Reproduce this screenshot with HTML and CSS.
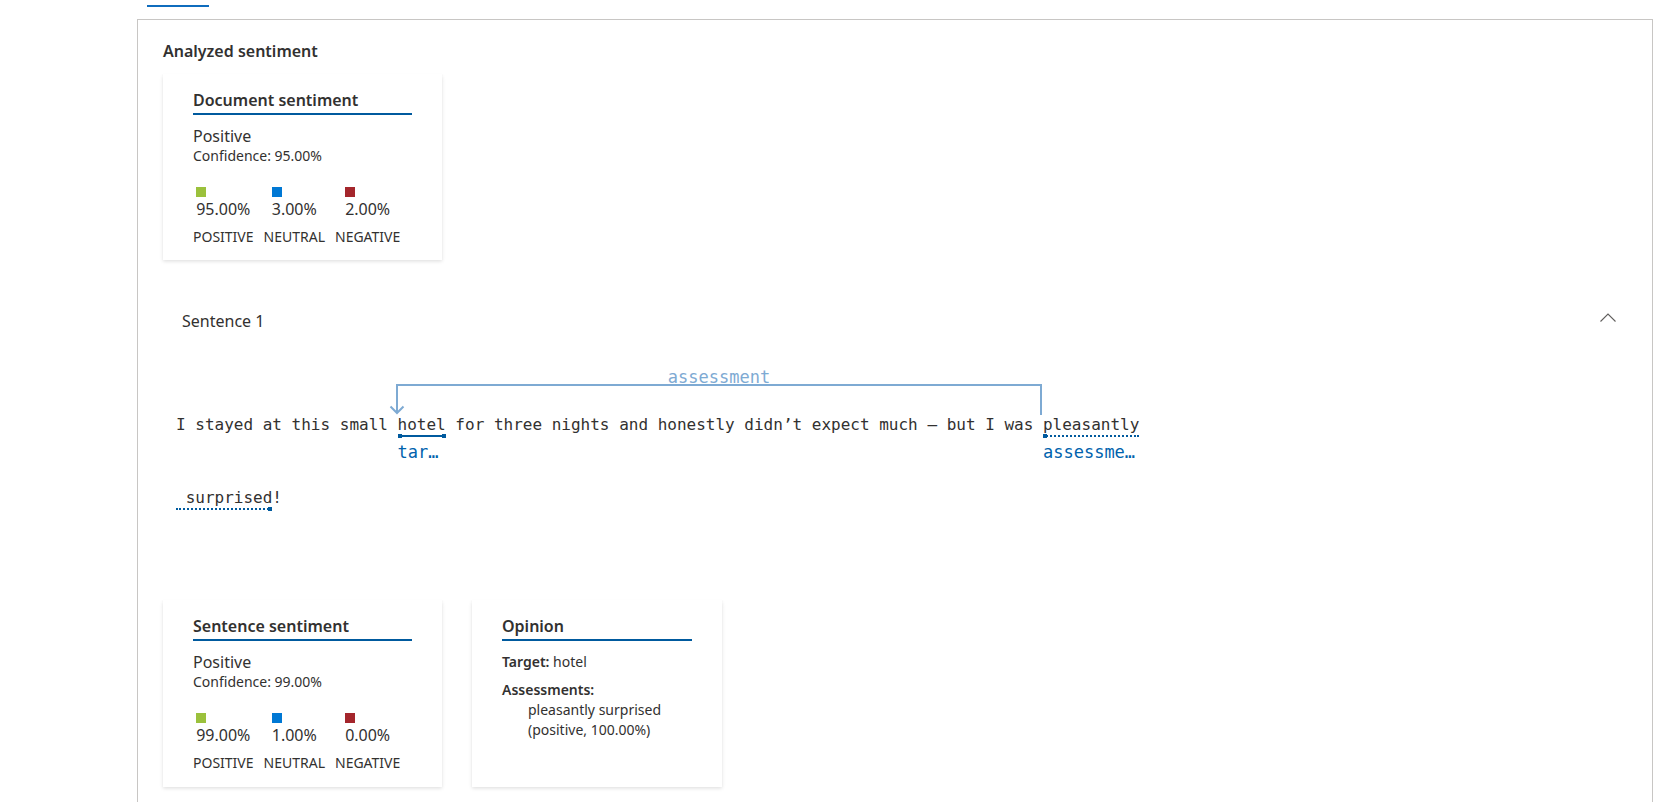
FILE: index.html
```html
<!DOCTYPE html>
<html lang="en">
<head>
<meta charset="utf-8">
<title>Analyzed sentiment</title>
<link rel="stylesheet" href="styles.css">
</head>
<body>
<div class="tabs"><div class="tab-indicator"></div></div>
<section class="panel">
  <h2 class="panel-title">Analyzed sentiment</h2>
  <div class="card doc-card">
    <h3 class="card-title">Document sentiment</h3>
    <div class="sent-label">Positive</div>
    <div class="confidence">Confidence: 95.00%</div>
    <div class="scores">
      <div class="score"><div class="score-val"><span class="swatch pos"></span><span class="pct">95.00%</span></div><div class="score-name">POSITIVE</div></div>
      <div class="score"><div class="score-val"><span class="swatch neu"></span><span class="pct">3.00%</span></div><div class="score-name">NEUTRAL</div></div>
      <div class="score"><div class="score-val"><span class="swatch neg"></span><span class="pct">2.00%</span></div><div class="score-name">NEGATIVE</div></div>
    </div>
  </div>

  <div class="sentence">
    <div class="sentence-header">
      <span class="sentence-name">Sentence 1</span>
      <button class="chevron" aria-label="Collapse">
        <svg width="16" height="9" viewBox="0 0 16 9"><polyline points="0.5,8.5 8,1 15.5,8.5" fill="none" stroke="#605e5c" stroke-width="1.1"/></svg>
      </button>
    </div>
    <div class="sentence-text">
      <svg class="arcs" width="900" height="80" viewBox="0 0 900 80">
        <path d="M865 75 V45 H221 V73" fill="none" stroke="#7eaad3" stroke-width="2"/>
        <path d="M214.5 66.5 L221 73 L227.5 66.5" fill="none" stroke="#7eaad3" stroke-width="2"/>
        <text x="543" y="43" text-anchor="middle" class="arc-label">assessment</text>
      </svg>
      <div class="line">
        <span class="tok">I stayed at this small </span>
        <span class="ann"><span class="ann-word solid start end">hotel</span><span class="ann-label">tar…</span></span>
        <span class="tok"> for three nights and honestly didn’t expect much — but I was </span>
        <span class="ann"><span class="ann-word dotted start">pleasantly</span><span class="ann-label">assessme…</span></span>
      </div>
      <div class="line">
        <span class="ann"><span class="ann-word dotted end"> surprised</span></span>
        <span class="tok">!</span>
      </div>
    </div>

    <div class="cards-row">
      <div class="card sent-card">
        <h3 class="card-title">Sentence sentiment</h3>
        <div class="sent-label">Positive</div>
        <div class="confidence">Confidence: 99.00%</div>
        <div class="scores">
          <div class="score"><div class="score-val"><span class="swatch pos"></span><span class="pct">99.00%</span></div><div class="score-name">POSITIVE</div></div>
          <div class="score"><div class="score-val"><span class="swatch neu"></span><span class="pct">1.00%</span></div><div class="score-name">NEUTRAL</div></div>
          <div class="score"><div class="score-val"><span class="swatch neg"></span><span class="pct">0.00%</span></div><div class="score-name">NEGATIVE</div></div>
        </div>
      </div>
      <div class="card opinion-card">
        <h3 class="card-title">Opinion</h3>
        <div class="op-target"><span class="op-key">Target:</span> hotel</div>
        <div class="op-assess">
          <div class="op-key">Assessments:</div>
          <div class="op-list">pleasantly surprised (positive, 100.00%)</div>
        </div>
      </div>
    </div>
  </div>
</section>
</body>
</html>
```

FILE: styles.css
```css
* { box-sizing: border-box; }
html, body { overflow: hidden; }
body {
  margin: 0;
  font-family: "Noto Sans", "Open Sans", sans-serif;
  color: #323130;
  background: #fff;
}
.tabs {
  height: 19px;
  padding: 5px 0 0 147px;
}
.tab-indicator {
  width: 62px;
  height: 2px;
  background: #0f6cbd;
}
.panel {
  margin-left: 137px;
  width: 1516px;
  height: 783px;
  border: 1px solid #c8c6c4;
  border-bottom: none;
  padding: 20px 25px 0 25px;
}
.panel-title {
  margin: 0;
  font-size: 16px;
  font-weight: 600;
  line-height: 22px;
}
.card {
  background: #fff;
  box-shadow: 0 1.6px 3.6px rgba(0,0,0,.13), 0 .3px .9px rgba(0,0,0,.11);
  padding: 16px 30px 14px;
}
.doc-card {
  width: 279px;
  height: 186px;
  margin-top: 12px;
}
.card-title {
  margin: 0;
  font-size: 16px;
  font-weight: 600;
  line-height: 20px;
  padding-bottom: 3px;
  border-bottom: 2px solid #005a9e;
}
.sent-label {
  margin-top: 10px;
  font-size: 16px;
  line-height: 22px;
}
.confidence {
  font-size: 14px;
  line-height: 18px;
}
.scores {
  display: flex;
  gap: 10px;
  margin-top: 22px;
}
.score {
  display: flex;
  flex-direction: column;
  align-items: center;
}
.score-val {
  display: flex;
  flex-direction: column;
  align-items: flex-start;
}
.swatch {
  width: 10px;
  height: 10px;
}
.swatch.pos { background: #9bc13c; }
.swatch.neu { background: #0078d4; }
.swatch.neg { background: #a4262c; }
.pct {
  margin-top: 1px;
  font-size: 16px;
  line-height: 22px;
}
.score-name {
  margin-top: 8px;
  font-size: 14px;
  line-height: 18px;
}

.sentence-header {
  display: flex;
  justify-content: space-between;
  align-items: flex-start;
  margin-top: 50px;
  padding: 0 11px 0 19px;
  font-size: 16px;
  line-height: 22px;
}
.chevron {
  margin-top: 3px;
  padding: 0;
  border: 0;
  background: none;
  width: 16px;
  height: 9px;
  display: flex;
}

.sentence-text {
  position: relative;
  margin-top: 8px;
  padding: 75px 0 0 13px;
  font-family: "DejaVu Sans Mono", "Liberation Mono", monospace;
  font-size: 16px;
  line-height: 20px;
  color: #323130;
}
.arcs {
  position: absolute;
  top: 0;
  left: 13px;
  overflow: visible;
}
.arc-label {
  font-family: "DejaVu Sans Mono", "Liberation Mono", monospace;
  font-size: 17px;
  fill: #7eaad3;
}
.line {
  display: flex;
  align-items: flex-start;
  white-space: pre;
}
.line + .line { margin-top: 26px; }
.ann {
  display: flex;
  flex-direction: column;
}
.ann-word {
  position: relative;
  border-bottom: 2px solid #005a9e;
}
.ann-word.dotted { border-bottom-style: dotted; }
.ann-word.start::before,
.ann-word.end::after {
  content: "";
  position: absolute;
  bottom: -3px;
  width: 4px;
  height: 4px;
  background: #005a9e;
}
.ann-word.start::before { left: 0; }
.ann-word.end::after { right: 0; }
.ann-label {
  margin-top: 5px;
  font-size: 17px;
  line-height: 20px;
  color: #0062ad;
}

.cards-row {
  display: flex;
  gap: 30px;
  margin-top: 90px;
}
.sent-card {
  width: 279px;
  height: 187px;
}
.opinion-card {
  width: 250px;
  height: 187px;
}
.op-target {
  margin-top: 11px;
  font-size: 14px;
  line-height: 20px;
}
.op-key { font-weight: 600; }
.op-assess {
  margin-top: 8px;
  font-size: 14px;
  line-height: 20px;
}
.op-list {
  padding-left: 26px;
}
```
